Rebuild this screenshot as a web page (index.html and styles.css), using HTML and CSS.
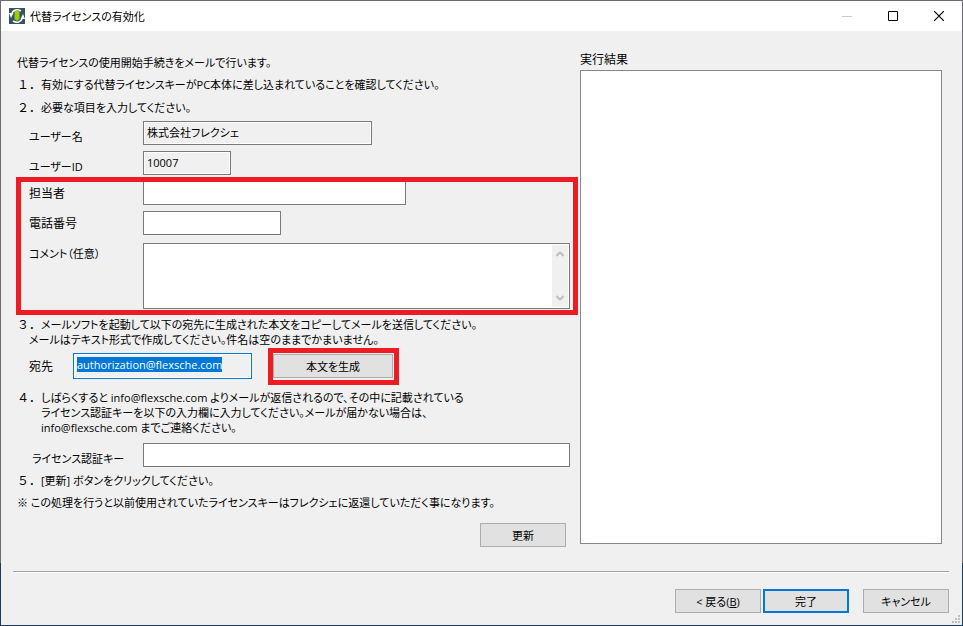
FILE: index.html
```
<!DOCTYPE html>
<html lang="ja">
<head>
    <meta charset="UTF-8">
    <meta name="viewport" content="width=device-width, initial-scale=1.0">
    <title>代替ライセンスの有効化</title>
    <link rel="stylesheet" href="styles.css">
</head>
<body>
    <div class="window">
        <header class="titlebar">
            <svg class="app-icon" width="16" height="16" viewBox="0 0 16 16">
                <rect width="16" height="16" fill="#34525f"/>
                <path d="M5.500 3h5v8l-2.500 2-2.500-2z" fill="#9bcb0a"/>
                <path d="M2.500 6C4 2 8 .5 12 3M13.500 10C12 14 8 15.500 4 13" fill="none" stroke="#fff" stroke-width="1.600"/>
                <path d="M0 5h4.500L2 10zM16 11h-4.500L14 6z" fill="#fff"/>
            </svg>
            <h1>代替ライセンスの有効化</h1>
            <div class="window-buttons">
                <button type="button" aria-label="最小化" disabled>
                    <svg width="10" height="10" viewBox="0 0 10 10"><path d="M0 5.500h10" stroke="#ccc"/></svg>
                </button>
                <button type="button" aria-label="最大化">
                    <svg width="10" height="10" viewBox="0 0 10 10"><path d="M.5.5h9v9h-9z" fill="none" stroke="#000"/></svg>
                </button>
                <button type="button" aria-label="閉じる">
                    <svg width="10" height="10" viewBox="0 0 10 10"><path d="M0 0l10 10M10 0L0 10" stroke="#000" stroke-width="1.200"/></svg>
                </button>
            </div>
        </header>

        <main class="content">
            <form class="steps">
                <p class="intro">代替ライセンスの使用開始手続きをメールで行います。</p>
                <p class="step"><span class="num">１．</span>有効にする代替ライセンスキーがPC本体に差し込まれていることを確認してください。</p>
                <p class="step"><span class="num">２．</span>必要な項目を入力してください。</p>

                <div class="row low">
                    <label for="userName">ユーザー名</label>
                    <input type="text" id="userName" class="w-name" value="株式会社フレクシェ" readonly>
                </div>
                <div class="row low">
                    <label for="userId">ユーザーID</label>
                    <input type="text" id="userId" class="w-id" value="10007" readonly>
                </div>

                <div class="highlight fields">
                    <div class="row">
                        <label for="person" class="kanji">担当者</label>
                        <input type="text" id="person" class="w-person">
                    </div>
                    <div class="row">
                        <label for="phone" class="kanji">電話番号</label>
                        <input type="text" id="phone" class="w-phone">
                    </div>
                    <div class="row comment">
                        <label for="comment">コメント（任意）</label>
                        <div class="comment-box">
                            <textarea id="comment"></textarea>
                            <div class="scrollbar">
                                <svg width="8" height="6" viewBox="0 0 8 6"><path d="M.5 5L4 1.500 7.500 5" fill="none" stroke="#bfbfbf" stroke-width="2"/></svg>
                                <svg width="8" height="6" viewBox="0 0 8 6"><path d="M.5 1L4 4.500 7.500 1" fill="none" stroke="#bfbfbf" stroke-width="2"/></svg>
                            </div>
                        </div>
                    </div>
                </div>

                <div class="step step-mail">
                    <span class="num">３．</span>
                    <p>メールソフトを起動して以下の宛先に生成された本文をコピーしてメールを送信してください。</p>
                    <p class="note">メールはテキスト形式で作成してください。件名は空のままでかまいません。</p>
                </div>
                <div class="row mail">
                    <label for="mailTo" class="kanji">宛先</label>
                    <input type="text" id="mailTo" class="w-mail" value="authorization@flexsche.com" readonly>
                    <div class="highlight generate">
                        <button type="button" class="btn">本文を生成</button>
                    </div>
                </div>

                <p class="step step-key"><span class="num">４．</span>しばらくすると info@flexsche.com よりメールが返信されるので、その中に記載されている<br>ライセンス認証キーを以下の入力欄に入力してください。メールが届かない場合は、<br>info@flexsche.com までご連絡ください。</p>
                <div class="row low key">
                    <label for="licenseKey">ライセンス認証キー</label>
                    <input type="text" id="licenseKey">
                </div>
                <p class="step"><span class="num">５．</span>[更新] ボタンをクリックしてください。</p>
                <p class="step-note">※ この処理を行うと以前使用されていたライセンスキーはフレクシェに返還していただく事になります。</p>
                <button type="button" class="btn update">更新</button>
            </form>

            <section class="result">
                <label for="result" class="kanji">実行結果</label>
                <textarea id="result" readonly></textarea>
            </section>
        </main>

        <footer class="footer">
            <button type="button" class="btn">&lt; 戻る(<u>B</u>)</button>
            <button type="button" class="btn default">完了</button>
            <button type="button" class="btn cancel">キャンセル</button>
            <svg class="grip" width="8" height="8" viewBox="0 0 8 8" fill="#bfbfbf">
                <path d="M6 0h2v2H6zM3 3h2v2H3zM6 3h2v2H6zM0 6h2v2H0zM3 6h2v2H3zM6 6h2v2H6z"/>
            </svg>
        </footer>
    </div>

    <script>
        // 宛先はすぐコピーできるように選択しておく
        const mailTo = document.getElementById('mailTo');
        mailTo.focus();
        mailTo.select();
    </script>
</body>
</html>
```
FILE: styles.css
```
* {
    box-sizing: border-box;
}
body {
    margin: 0;
    font-family: "Open Sans", "Noto Sans CJK JP", sans-serif;
    font-size: 11px;
    line-height: 15px;
    font-feature-settings: "palt";
    color: #000;
}
p, h1 {
    margin: 0;
}
input, textarea, button {
    font: inherit;
    font-feature-settings: inherit;
    color: inherit;
    margin: 0;
    border-radius: 0;
    outline: none;
}
.window {
    position: relative;
    display: flex;
    flex-direction: column;
    min-height: 100vh;
    background-color: #f0f0f0;
    border: 1px solid;
    border-image: linear-gradient(#6b6b70 90%, #1c3a63 90%) 1;
}

/* タイトルバー */
.titlebar {
    display: flex;
    align-items: center;
    height: 30px;
    padding-left: 8px;
    background-color: #fff;
}
.titlebar h1 {
    margin-left: 5px;
    font-size: 11px;
    font-weight: normal;
}
.window-buttons {
    display: flex;
    margin-left: auto;
}
.window-buttons button {
    display: flex;
    align-items: center;
    justify-content: center;
    width: 46px;
    height: 29px;
    padding: 0;
    border: none;
    background: none;
}

/* 本体 */
.content {
    flex: 1;
    display: grid;
    grid-template-columns: 553px 1fr;
    gap: 10px;
    padding: 21px 20px 24px 16px;
}
.steps {
    display: flex;
    flex-direction: column;
    gap: 6px;
    padding-top: 3px;
}
.step {
    position: relative;
    padding-left: 24px;
    white-space: nowrap;
}
.step .num {
    position: absolute;
    left: 0;
    font-size: 12px;
    font-feature-settings: normal;
}
.intro, .step-note {
    white-space: nowrap;
}
.intro + .step {
    margin: 1px 0 2px;
}
.step-mail {
    margin-top: 2px;
}
.step-mail .note {
    margin-left: -12px;
}
.step-key {
    margin: 5px 0 2px;
}

.kanji {
    font-size: 12px;
}
.row {
    display: grid;
    grid-template-columns: 114px 1fr;
    align-items: center;
    padding-left: 12px;
}
.row.low label {
    padding-top: 6px;
}
.row input {
    width: 100%;
    height: 24px;
    padding: 0 3px 2px;
    border: 1px solid #7a7a7a;
    background-color: #fff;
}
.row input:read-only {
    background-color: #f0f0f0;
    box-shadow: inset 0 0 0 1px #fff;
}
.row .w-name {
    width: 229px;
}
.row .w-id {
    width: 88px;
}
.row .w-person {
    width: 263px;
}
.row .w-phone {
    width: 138px;
}
.row.key {
    padding-left: 15px;
    grid-template-columns: 111px 1fr;
}

/* 赤枠 */
.highlight {
    position: relative;
}
.highlight::after {
    content: "";
    position: absolute;
    border: 5px solid #ed1c24;
    pointer-events: none;
}
.fields {
    display: flex;
    flex-direction: column;
    gap: 6px;
}
.fields::after {
    inset: -4px -8px -6px -1px;
}
.generate::after {
    inset: -6px -6px -7px -5px;
}

.row.comment {
    align-items: start;
    margin-top: 2px;
}
.comment label {
    padding-top: 3px;
}
.comment-box {
    display: flex;
    height: 66px;
    padding: 1px;
    border: 1px solid #7a7a7a;
    background-color: #fff;
}
.comment-box textarea {
    flex: 1;
    padding: 2px;
    border: none;
    resize: none;
}
.scrollbar {
    display: flex;
    flex-direction: column;
    align-items: center;
    justify-content: space-between;
    width: 16px;
    padding: 6px 0;
    background-color: #f0f0f0;
}

.row.mail {
    grid-template-columns: 44px 179px 141px;
}
.mail .generate {
    margin-left: 21px;
}
.mail .generate .btn {
    display: block;
    width: 100%;
}
.row .w-mail {
    height: 26px;
    padding-bottom: 4px;
    border-color: #0078d7;
}
.w-mail::selection {
    background-color: #0078d7;
    color: #fff;
}
.step-note {
    margin-top: 1px;
}

.btn {
    width: 86px;
    height: 24px;
    padding: 0;
    border: 1px solid #adadad;
    background-color: #e1e1e1;
}
.btn.default {
    border: 2px solid #0078d7;
}
.btn.update {
    align-self: flex-end;
    margin: 7px 4px 0 0;
}

.result {
    display: flex;
    flex-direction: column;
    gap: 3px;
    padding-bottom: 3px;
}
.result textarea {
    flex: 1;
    border: 1px solid #828790;
    background-color: #fff;
    resize: none;
}

/* フッター */
.footer {
    display: flex;
    justify-content: flex-end;
    gap: 2px;
    margin: 0 13px 0 12px;
    padding: 17px 0 12px;
    border-top: 1px solid #a0a0a0;
    box-shadow: inset 0 1px #fff;
}
.footer .cancel {
    margin-left: 12px;
}
.grip {
    position: absolute;
    right: 2px;
    bottom: 2px;
}
```
